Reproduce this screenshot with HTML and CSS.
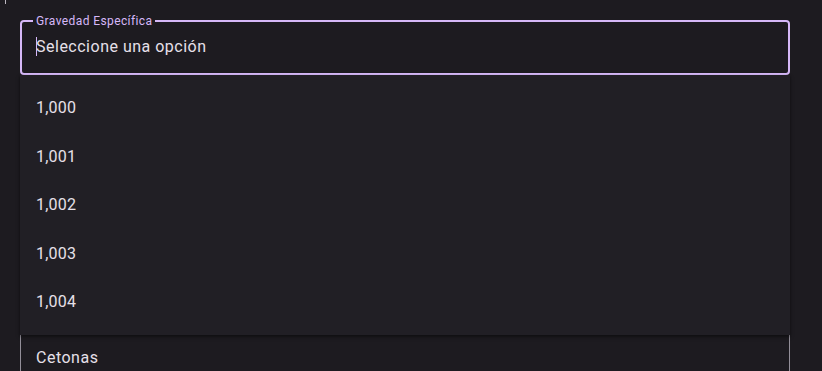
FILE: index.html
```html
<!DOCTYPE html>
<html lang="es">
<head>
<meta charset="utf-8">
<title>Gravedad Específica</title>
<link rel="stylesheet" href="styles.css">
</head>
<body>
<div class="tick"></div>
<div class="form">
  <div class="field focused">
    <span class="label">Gravedad Específica</span>
    <div class="value"><span class="caret"></span>Seleccione una opción</div>
    <ul class="menu">
      <li>1,000</li>
      <li>1,001</li>
      <li>1,002</li>
      <li>1,003</li>
      <li>1,004</li>
    </ul>
  </div>
  <div class="field plain">
    <div class="value">Cetonas</div>
  </div>
</div>
</body>
</html>
```
FILE: styles.css
```css
html, body {
  margin: 0;
  padding: 0;
  background: #1d1b20;
  height: 100%;
  overflow: hidden;
}
body {
  font-family: Roboto, "Noto Sans", sans-serif;
  color: #e6e0e9;
}
.tick {
  width: 1px;
  height: 4px;
  margin-left: 5px;
  background: #bdb8c2;
}
.form {
  display: flex;
  flex-direction: column;
  padding: 16px 32px 0 20px;
}
.field {
  position: relative;
  box-sizing: border-box;
  border-radius: 4px;
  display: flex;
  align-items: center;
}
.field.focused {
  height: 55px;
  border: 2px solid #d6b8f8;
}
.field.plain {
  margin-top: 255px;
  height: 56px;
  border: 1px solid #938f99;
}
.label {
  position: absolute;
  top: -9px;
  left: 11px;
  padding: 0 3px;
  background: #1d1b20;
  color: #d6b8f8;
  font-size: 12px;
  line-height: 16px;
  letter-spacing: 0.4px;
}
.value {
  padding-left: 14px;
  font-size: 16px;
  line-height: 24px;
  letter-spacing: 0.5px;
  color: #e6e0e9;
  display: flex;
  align-items: center;
}
.field.focused .value {
  padding-left: 14px;
  margin-top: -2px;
}
.field.plain .value {
  padding-left: 15px;
  margin-top: 0;
}
.caret {
  display: inline-block;
  width: 1px;
  height: 19px;
  background: #d6b8f8;
  margin-right: -1px;
}
.menu {
  position: absolute;
  top: 53px;
  left: -2px;
  right: -2px;
  margin: 0;
  padding: 8.5px 0 9px;
  list-style: none;
  background: #211f25;
  box-shadow: 0 2px 4px rgba(0, 0, 0, 0.35), 0 1px 2px rgba(0, 0, 0, 0.25);
  z-index: 2;
}
.menu li {
  height: 48.5px;
  display: flex;
  align-items: center;
  padding-left: 16px;
  font-size: 16px;
  letter-spacing: 0.2px;
  color: #e6e0e9;
}
```
